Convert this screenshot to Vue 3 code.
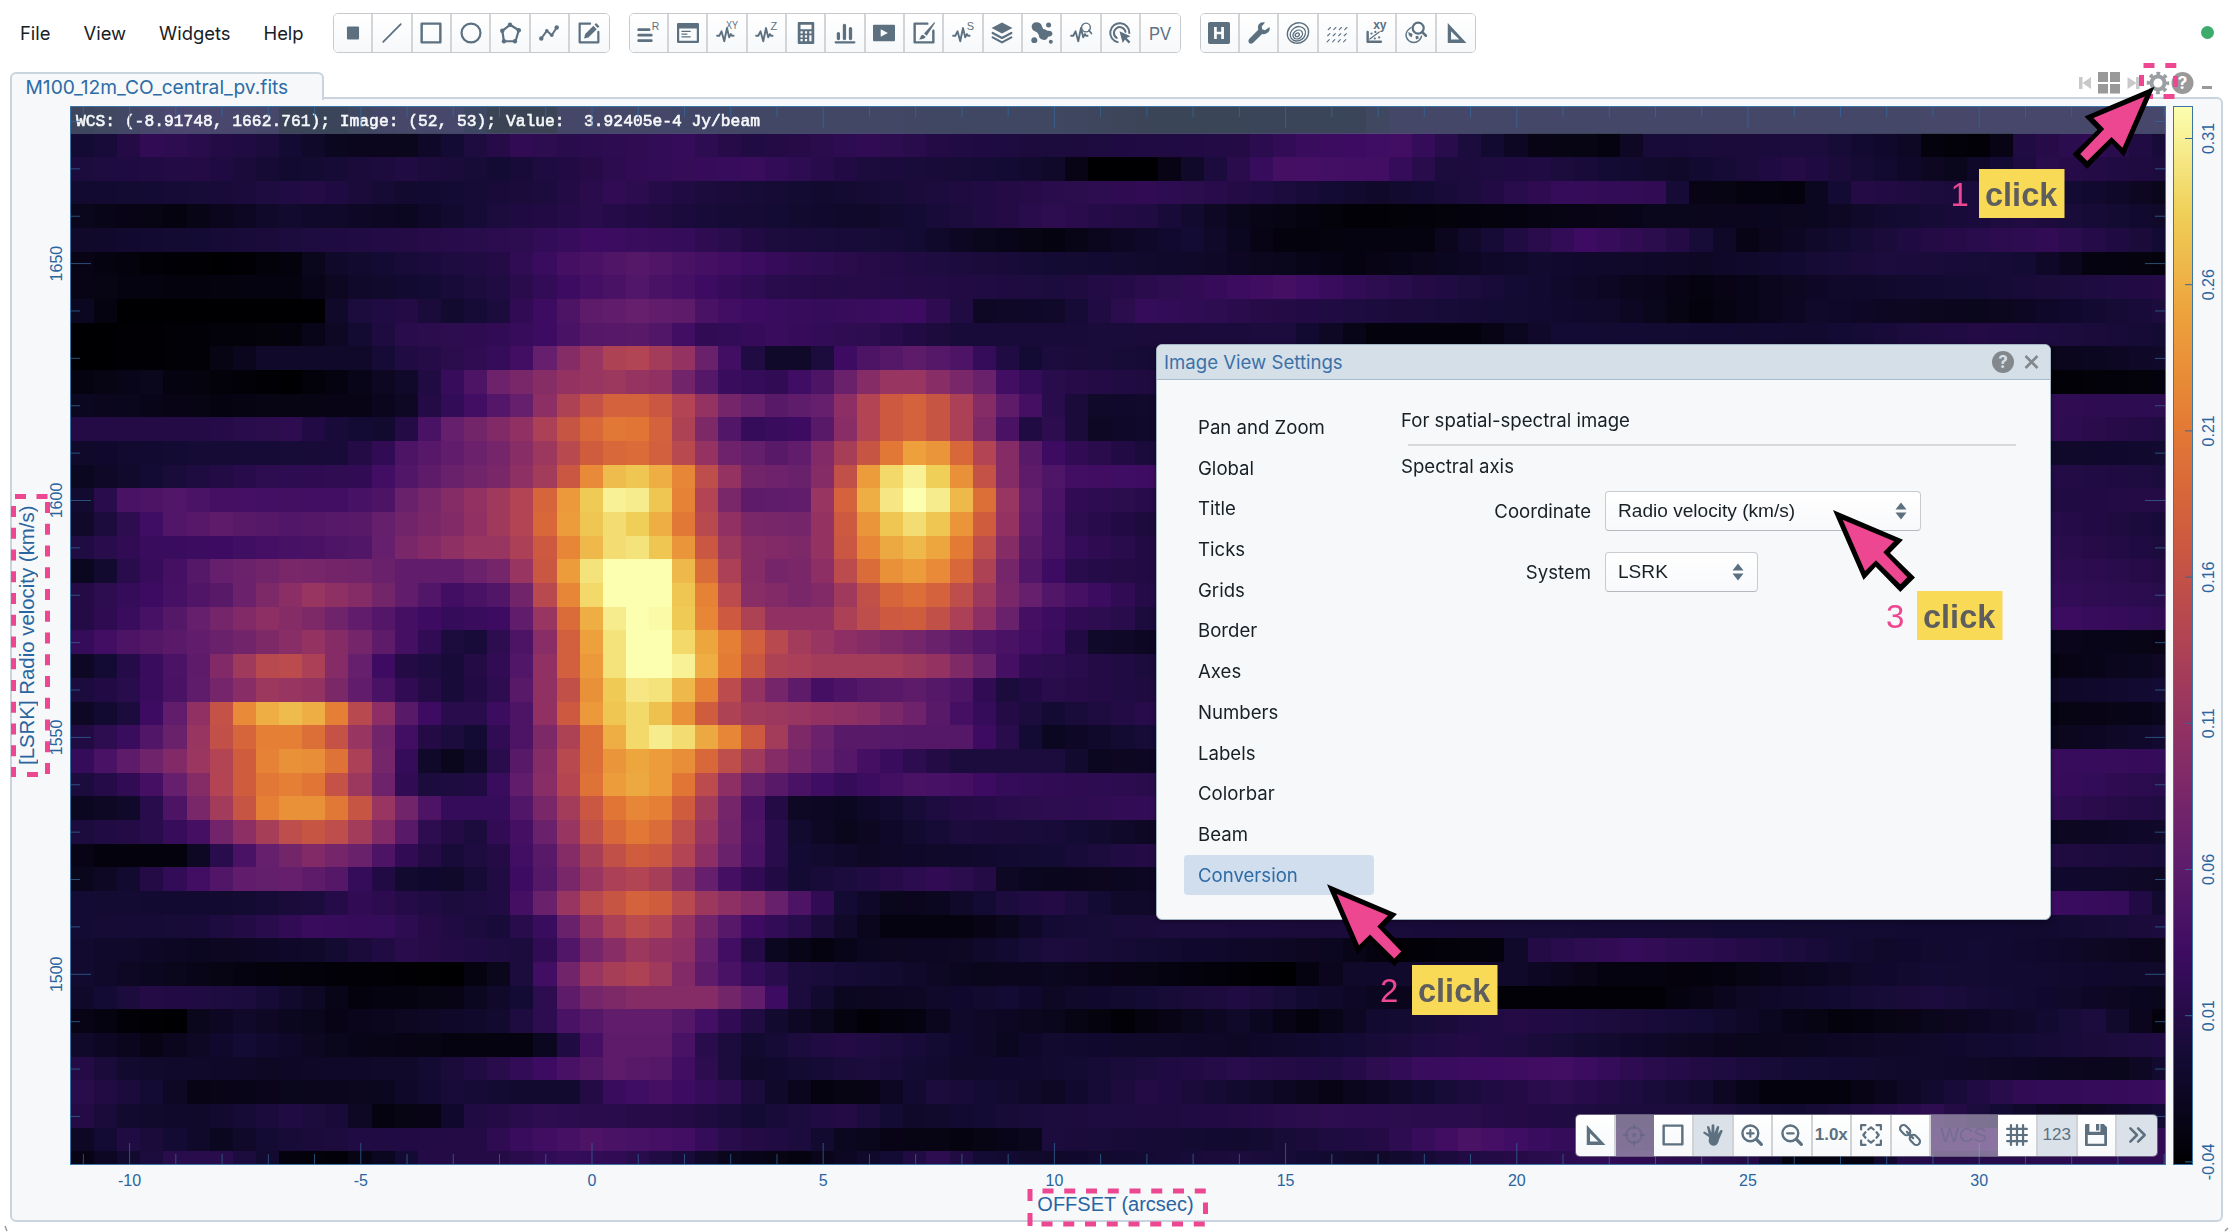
<script setup>
import { ref, onMounted } from 'vue'

const W = 2096
const H = 1059
const canvas = ref(null)

/* ---- colour map ---- */
const stops = [
  [0, 0, 2], [20, 11, 52], [61, 12, 98], [101, 31, 108], [141, 47, 101], [178, 68, 83],
  [208, 92, 62], [228, 123, 52], [237, 160, 59], [239, 207, 88], [252, 255, 176]
]
function colour(v) {
  const t = Math.max(0, Math.min(99.999, v)) / 10
  const i = Math.floor(t)
  const f = t - i
  return 'rgb(' + stops[i].map((c, k) => Math.round(c + (stops[i + 1][k] - c) * f)).join(',') + ')'
}

/* One line per channel: "column:level" knots, levels are interpolated between them. */
const rows = `
0:8,2:12,4:18,8:15,9:5,11:6,13:14,16:15,18:4,20:4,21:14,42:10,46:5,55:6,57:14,75:14,90:15
0:10,1:11,3:17,6:14,8:12,11:6,14:5,16:10,19:17,21:15,26:18,29:13,34:17,38:13,42:12,50:14,53:19,57:21,60:12,63:4,66:3,68:11,75:12,79:7,80:2,82:1,83:4,84:13,87:17,90:11
0:12,5:14,9:9,14:13,18:10,24:17,29:19,34:12,40:10,42:8,44:0,46:0,49:12,52:22,56:21,59:12,63:13,66:10,69:8,74:14,78:9,81:5,85:15,90:12
0:9,6:11,10:14,14:9,20:12,23:17,27:12,32:9,37:12,42:15,46:17,50:14,56:8,60:12,64:18,68:17,70:4,74:2,77:14,80:12,86:10,90:5
0:5,4:3,9:9,14:6,18:12,22:15,27:11,34:8,38:12,42:16,46:13,50:5,55:1,60:2,68:5,75:6,78:9,84:13,90:8
0:8,5:10,9:12,14:14,19:16,22:20,26:18,30:12,36:10,39:5,42:3,48:10,52:2,58:3,62:13,65:20,69:14,72:4,80:14,85:17,90:10
0:4,3:1,6:0,9:2,11:8,14:11,18:14,21:22,24:26,27:22,31:17,36:13,42:10,48:8,55:3,63:9,70:7,78:12,84:10,87:3,90:2
0:4,4:2,9:3,12:8,15:10,18:13,21:20,24:25,27:20,30:15,36:14,42:12,48:17,52:22,56:16,62:10,70:3,76:8,82:10,90:14
0:6,2:0,10:0,11:8,12:12,14:14,16:9,18:12,19:17,20:20,21:24,22:28,24:30,26:28,27:23,28:21,29:20,32:18,34:19,36:20,38:13,39:7,42:8,46:18,52:14,56:12,66:8,70:2,75:8,82:5,90:12
0:0,9:2,11:7,14:15,18:17,20:20,21:23,22:26,24:27,25:25,27:17,30:19,34:16,38:11,42:11,52:12,56:2,60:2,64:10,75:9,82:14,90:10
0:0,5:1,8:8,12:8,14:13,18:18,19:21,20:30,21:38,22:43,23:49,24:50,25:46,26:42,27:31,28:21,29:13,30:8,31:8,32:12,33:20,34:24,36:28,38:24,39:18,40:13,41:10,42:12,47:10,85:5,90:8
0:3,3:5,4:3,7:1,9:0,11:3,14:8,15:13,17:24,18:32,19:35,21:42,23:44,25:41,26:33,27:26,28:19,30:17,32:24,33:31,34:38,35:43,36:43,37:39,39:31,40:21,42:15,47:12,85:1,90:2
0:6,6:3,12:4,14:7,15:14,17:21,19:30,20:40,21:49,22:56,23:62,24:62,25:58,26:50,27:42,28:34,30:27,32:30,33:40,34:50,35:59,36:62,37:57,38:48,39:38,40:28,41:22,42:15,44:8,47:9,85:17,90:16
0:14,5:14,9:16,11:11,13:9,14:14,15:23,16:30,18:37,19:41,20:48,21:57,22:64,23:69,24:68,25:62,26:49,27:36,28:25,29:18,31:20,32:27,33:39,34:50,35:59,36:62,37:57,38:48,39:36,40:23,41:13,42:16,44:7,47:9,85:17,90:13
0:8,4:10,11:11,13:17,14:24,16:29,18:34,20:44,21:52,22:60,23:64,24:65,25:61,26:52,27:42,28:32,30:27,31:29,32:37,33:47,34:57,35:69,36:80,37:77,38:64,39:50,40:38,41:27,42:20,43:17,47:10,85:8,90:9
0:6,3:10,8:16,12:17,14:25,16:31,18:35,20:46,21:58,22:74,23:86,24:88,25:83,26:73,27:54,28:42,29:33,31:31,32:38,33:55,34:79,35:92,36:97,37:90,38:76,39:56,40:38,41:28,43:21,47:20,85:14,90:12
0:9,1:15,2:23,4:25,6:22,11:21,13:24,14:31,16:38,18:45,19:50,20:63,21:78,22:89,23:97,24:96,25:88,26:72,27:50,28:35,29:28,31:29,32:43,33:62,34:83,35:95,36:100,37:96,38:85,39:66,40:43,41:30,43:17,47:14,85:13,90:14
0:8,2:16,4:25,6:28,9:25,12:27,14:33,16:37,18:45,19:50,20:64,21:79,22:88,23:93,24:90,25:83,26:69,27:52,28:41,29:35,31:34,32:42,33:59,34:77,35:88,36:93,37:88,38:77,39:60,40:42,41:29,43:16,47:11,85:15,90:11
0:13,3:19,6:20,12:25,14:35,17:43,18:43,19:48,20:59,21:73,22:85,23:93,24:94,25:88,26:77,27:58,28:44,29:38,31:36,32:42,33:58,34:73,35:82,36:85,37:81,38:70,39:54,40:38,41:27,43:18,47:12,85:16,90:12
0:6,1:9,2:15,4:22,6:30,9:35,12:33,14:29,16:29,18:34,19:43,20:58,21:79,22:94,23:100,25:100,26:85,27:65,28:48,29:38,30:34,31:35,32:40,33:53,34:65,35:76,36:79,37:74,38:64,39:49,40:34,41:25,43:15,47:13,85:17,90:14
0:14,3:20,6:27,8:36,10:43,12:38,14:29,16:21,18:25,19:33,20:52,21:73,22:92,23:100,25:100,26:88,27:72,28:53,29:39,31:35,32:37,33:45,34:55,35:63,36:66,37:62,38:54,39:44,40:35,41:30,42:25,45:17,47:12,85:18,90:15
0:14,2:19,4:26,6:34,8:40,10:36,12:29,14:22,16:18,18:20,19:29,20:43,21:65,22:83,23:96,24:100,25:99,26:89,27:73,28:59,29:49,30:41,32:41,33:48,34:54,35:59,36:60,37:55,38:48,39:40,40:31,41:22,43:17,45:15,47:9,85:20,90:17
0:18,2:24,5:29,7:33,10:42,12:34,14:22,16:12,17:11,18:16,19:24,20:39,21:61,22:80,23:94,24:100,25:100,26:92,27:81,28:71,29:61,30:52,31:46,33:40,36:34,39:25,42:19,44:8,47:6,85:5,90:4
0:7,1:10,3:19,5:28,6:37,7:45,8:52,9:53,10:48,11:38,12:30,13:20,14:14,16:11,18:17,19:25,20:41,21:61,22:78,23:94,24:100,25:100,26:97,27:83,28:70,29:58,30:49,32:46,35:46,37:42,39:31,40:22,41:17,47:11,85:3,90:7
0:12,2:15,4:23,6:34,8:44,10:42,12:29,14:17,16:11,18:16,19:27,20:41,21:55,22:76,23:89,24:95,25:94,26:85,27:72,28:53,29:42,30:34,32:22,34:26,36:28,38:24,39:17,40:12,42:15,47:12,85:7,90:10
0:7,2:12,3:20,4:29,5:41,6:56,7:74,8:83,9:86,10:83,11:71,12:52,13:40,14:27,15:20,16:15,17:15,19:24,20:41,21:59,22:78,23:88,24:92,25:87,26:76,27:60,28:49,29:45,31:43,34:39,36:32,38:22,40:14,42:10,47:16,85:3,90:5
0:13,2:19,4:31,5:43,6:55,7:63,8:71,9:71,10:66,11:56,12:43,13:33,14:21,15:14,17:10,18:17,19:24,20:36,21:49,22:66,23:83,24:92,25:96,26:93,27:82,28:73,29:59,30:46,31:36,33:27,36:26,38:26,39:20,41:10,42:6,47:12,85:5,90:9
0:18,2:28,4:37,6:50,7:60,8:72,9:76,10:75,11:67,12:48,13:34,14:18,15:8,16:5,17:8,18:15,19:27,20:38,21:52,22:66,23:77,24:81,25:79,26:75,27:64,28:54,29:45,30:38,32:30,34:22,36:16,38:12,42:12,44:6,47:7,85:19,90:18
0:12,2:17,3:22,4:30,5:38,6:50,7:60,8:69,9:71,10:68,11:56,12:44,13:32,14:17,15:12,17:13,18:19,19:29,20:39,21:51,22:67,23:79,24:82,25:79,26:68,27:53,28:40,29:31,31:23,33:18,36:23,38:22,40:18,42:17,47:15,85:19,90:15
0:6,2:8,3:15,4:24,5:35,6:46,7:57,8:71,9:76,10:76,11:69,12:57,13:43,14:33,15:24,16:18,18:18,19:25,20:35,21:46,22:58,23:68,24:73,25:71,26:60,27:46,28:34,29:23,30:14,31:7,33:6,35:9,38:14,42:16,47:18,85:17,90:13
0:12,3:15,5:22,6:33,7:40,8:47,9:54,10:57,11:54,12:46,13:37,14:27,15:16,17:12,19:22,20:31,21:43,22:55,23:64,24:69,25:65,26:54,27:43,28:33,29:24,30:15,31:9,33:5,36:9,38:12,42:11,47:6,85:6,90:8
0:4,1:2,4:2,5:7,6:15,7:23,8:30,10:37,12:31,13:24,14:17,16:11,18:14,19:21,20:27,21:38,22:47,23:55,24:60,25:58,26:50,27:40,28:31,29:23,30:15,31:10,34:7,37:8,42:10,47:15,85:13,90:11
0:5,2:9,3:14,5:21,7:29,9:30,11:26,12:18,14:9,16:8,18:13,19:20,20:26,21:35,22:43,23:48,24:50,25:47,26:39,27:30,28:22,29:17,31:10,34:13,37:17,39:14,40:7,42:5,47:7,85:9,90:7
0:10,6:9,10:12,12:17,16:12,18:13,19:22,20:31,21:43,22:52,23:57,24:62,25:60,26:52,27:44,29:37,31:24,33:10,35:5,37:6,40:12,42:14,45:8,47:8,85:20,88:18,90:9
0:10,5:11,8:15,10:19,13:18,16:13,18:11,20:19,21:31,22:41,23:48,24:53,25:50,26:42,27:33,29:20,31:15,33:8,35:3,38:3,40:5,42:10,47:12,85:9,90:12
0:9,5:6,10:8,14:15,17:13,19:12,20:17,21:25,22:34,24:44,26:40,27:30,28:21,29:14,30:6,32:3,34:6,38:7,42:12,47:9,54:6,57:1,61:2,63:14,67:18,72:14,78:8,82:10,90:5
0:9,3:6,8:2,16:0,18:5,19:12,20:21,21:33,22:43,23:47,24:49,25:45,26:37,27:28,29:18,31:12,35:9,39:5,42:6,48:2,52:0,55:8,58:9,62:8,66:3,70:2,76:7,80:10,90:8
0:8,3:14,7:12,10:7,12:2,16:4,19:10,20:16,21:28,22:34,24:38,27:38,29:29,30:20,31:12,33:6,36:7,40:10,42:7,50:13,56:6,60:1,68:1,72:7,80:12,90:5
0:4,2:1,4:0,5:5,7:8,11:4,15:7,18:9,20:16,21:23,23:29,25:29,26:26,28:17,30:9,32:5,34:1,36:3,38:8,42:5,45:1,50:8,53:2,56:9,62:14,70:10,76:2,84:8,87:12,90:2
0:8,3:4,7:10,11:5,16:3,19:3,20:6,21:13,22:22,23:28,25:28,26:23,27:15,29:9,31:12,33:14,36:11,40:6,42:9,50:7,55:10,60:14,66:9,72:5,80:8,90:13
0:14,2:9,8:7,14:8,18:15,20:20,23:28,25:26,27:16,29:8,34:12,38:8,42:9,50:15,54:13,58:19,64:21,68:15,74:10,80:8,88:5,90:9
0:15,3:10,5:4,9:5,13:6,16:11,19:9,21:9,23:19,25:22,28:16,30:8,32:3,34:4,37:12,42:7,46:14,50:9,54:4,60:12,64:16,70:9,73:2,76:2,80:9,84:17,90:19
0:14,2:9,5:8,9:13,11:11,13:3,15:4,17:13,20:16,26:14,29:10,33:14,36:8,42:12,48:13,54:16,60:15,66:12,70:12,74:9,80:16,83:10,86:5,90:10
0:7,2:13,4:10,6:6,8:10,12:13,17:14,19:19,22:24,26:21,28:15,31:12,33:6,35:4,38:3,41:5,42:12,50:9,56:14,60:23,64:18,67:14,73:12,78:16,84:20,90:17
0:4,2:9,4:15,6:15,8:9,9:2,11:1,13:6,15:14,18:14,21:18,23:17,26:11,28:5,31:3,35:10,37:16,39:10,42:8,50:12,56:8,60:13,66:17,72:14,74:3,77:3,79:14,90:17
`.trim().split('\n').map(l => l.split(',').map(k => k.split(':').map(Number)))

function sample(knots, c) {
  for (let i = 1; i < knots.length; i++) {
    if (c <= knots[i][0]) {
      const [a, va] = knots[i - 1]
      const [b, vb] = knots[i]
      return va + (vb - va) * (c - a) / (b - a)
    }
  }
  return knots[knots.length - 1][1]
}

onMounted(() => {
  const g = canvas.value.getContext('2d')
  rows.forEach((knots, r) => {
    const y0 = r === 0 ? 0 : Math.round(3.5 + 23.68 * r)
    const y1 = Math.round(3.5 + 23.68 * (r + 1))
    for (let c = 0; c < 91; c++) {
      const x0 = c ? Math.round(1 + 23.12 * c) : 0
      const x1 = Math.round(1 + 23.12 * (c + 1))
      g.fillStyle = colour(sample(knots, c))
      g.fillRect(x0, y0, x1 - x0, y1 - y0)
    }
  })
})

/* ---- axes ---- */
const xTicks = []
for (let k = -11; k <= 34; k++) xTicks.push({ x: 522 + 46.24 * k, major: k % 5 === 0, v: k })
const yTicks = []
for (let k = -13; k <= 8; k++) yTicks.push({ y: 394.5 + 47.38 * -k, major: k % 5 === 0, v: 1600 + k * 10 })
const yShown = yTicks.filter(t => t.y > 4 && t.y < H - 1)
const bar = ['0.31', '0.26', '0.21', '0.16', '0.11', '0.06', '0.01', '-0.04'].map((t, i) => ({ t, y: 32.5 + 146.2 * i }))

/* ---- icons, 20 x 20 grid ---- */
const s = (d, w = 2) => `<path d="${d}" fill="none" stroke="currentColor" stroke-width="${w}" stroke-linecap="round" stroke-linejoin="round"/>`
const f = d => `<path d="${d}" fill="currentColor" fill-rule="evenodd"/>`
const t = (x, y, z, str, extra = '') => `<text x="${x}" y="${y}" font-size="${z}" font-family="Liberation Sans, sans-serif" fill="currentColor" ${extra}>${str}</text>`
const pulse = s('M1 12.5H3L5 8.5L7.5 17.5L10 5.5L12 14L13.5 11L14.5 12.5H16', 1.7)
const ruler = f('M2.5 1V19H19.5ZM5.5 8.5L13 16H5.5Z')
const icons = {
  point: f('M5.5 4H14.5Q15.5 4 15.5 5V15Q15.5 16 14.5 16H5.5Q4.5 16 4.5 15V5Q4.5 4 5.5 4Z'),
  line: s('M2 18L18 2', 1.6),
  rect: s('M1.5 1.5H18.5V18.5H1.5Z', 2.2),
  ellipse: '<circle cx="10" cy="10" r="8.6" fill="none" stroke="currentColor" stroke-width="2"/>',
  polygon: s('M10 2.5L18 7.5L15 17.5L4.5 17.5L3 8Z') + '<g fill="currentColor"><circle cx="10" cy="2.5" r="2"/><circle cx="18" cy="7.5" r="2"/><circle cx="14.5" cy="17.5" r="2"/><circle cx="4.5" cy="17.5" r="2"/><circle cx="3" cy="8" r="2"/></g>',
  poly: s('M3 15L8 8L12.5 12L17 5', 1.8) + '<g fill="currentColor"><circle cx="3" cy="15" r="2"/><circle cx="8" cy="8" r="1.6"/><circle cx="12.5" cy="12" r="1.6"/><circle cx="17" cy="5" r="2"/></g>',
  edit: s('M11 1.5H1.5V18.5H18.5V9', 2) + f('M5.5 15L6.5 11L14 3.5L17 6.5L9.5 14ZM15 2.5L16.5 1L19.5 4L18 5.5Z'),
  list: s('M1.5 7H11M1.5 12H13M1.5 17H13', 2.5) + t(13.5, 7.5, 9.5, 'R'),
  app: f('M1 1H19Q20 1 20 2V18Q20 19 19 19H1Q0 19 0 18V2Q0 1 1 1ZM2 6V17H18V6Z') + s('M4.5 8.5H12M4.5 11H9M4.5 13.5H12', 1.2),
  xy: pulse + t(9, 6.5, 10.5, 'XY', 'textLength="11" lengthAdjust="spacingAndGlyphs"'),
  z: pulse + t(14, 7, 10, 'Z'),
  st: pulse + t(13.5, 7.5, 10, 'S'),
  calc: f('M3.5 0H16.5Q17.5 0 17.5 1V19Q17.5 20 16.5 20H3.5Q2.5 20 2.5 19V1Q2.5 0 3.5 0ZM5 2.5V6.5H15V2.5ZM5 8.5V10.5H7V8.5ZM9 8.5V10.5H11V8.5ZM13 8.5V10.5H15V8.5ZM5 12V14H7V12ZM9 12V14H11V12ZM13 12V17.5H15V12ZM5 15.5V17.5H7V15.5ZM9 15.5V17.5H11V15.5Z'),
  hist: s('M1.5 18.5H18.5', 2) + s('M4 10.5V15M9.5 3V15M15 6V15', 3),
  play: f('M1 2.5H19Q20 2.5 20 3.5V16.5Q20 17.5 19 17.5H1Q0 17.5 0 16.5V3.5Q0 2.5 1 2.5ZM7 6.5V13.5L13.5 10Z'),
  brush: s('M13 1.5H1.5V18.5H18.5V8', 2.2) + f('M19.5 0L20 1L12.5 12.5L10 10.5ZM9 11.5L11.5 13.5Q10.5 16 5.5 16Q7 14 7 13Q7.5 11.5 9 11.5Z'),
  layers: f('M10 0.5L19.5 5.5L10 10.5L0.5 5.5Z') + s('M1.5 10L10 14.5L18.5 10M1.5 14L10 18.5L18.5 14', 2),
  scatter: f('M0.5 4.5Q1 0.3 5 0.3Q9 0.3 10 4Q10.500 6.500 12.500 6.500L15 8Q19.5 7.500 19.5 11Q19 13.5 15.500 13.5Q14 17.500 10 16Q7 14.500 7 11.500Q5.500 9 3.500 8.500Q1 7.500 0.5 4.5Z') + '<g fill="currentColor"><circle cx="16" cy="2.8" r="2.3"/><circle cx="3" cy="16.5" r="2.7"/><circle cx="18" cy="18" r="1.8"/></g>',
  q: pulse + '<circle cx="14.5" cy="5" r="4" fill="none" stroke="currentColor" stroke-width="1.3"/>' + s('M17.2 7.5L19.5 10.5', 1.5),
  target: s('M8 18.3A8.7 8.7 0 1 1 18.5 10M7 14.5A5.3 5.3 0 1 1 15 9', 1.8) + f('M9.5 8.5L19.5 13L16 14.5L19.5 18L18 19.5L14.5 16L12.5 19Z'),
  pv: t(0, 16.5, 17, 'PV', 'textLength="20" lengthAdjust="spacingAndGlyphs"'),
  h: f('M1.5 0H18.5Q20 0 20 1.5V18.5Q20 20 18.5 20H1.5Q0 20 0 18.5V1.5Q0 0 1.5 0ZM5.5 4.5V15.5H8V11.2H12V15.5H14.5V4.5H12V8.8H8V4.5Z'),
  wrench: f('M19.5 4.5L15.5 7.5L12.8 6.5L12.5 4L15.5 0.5Q11.5 -0.5 9.5 2.5Q8.5 4.5 9.3 7L1 15.5Q-0.5 17.5 1 19Q2.5 20.5 4.5 19L12.8 10.8Q15.5 11.5 17.5 10Q20.5 8 19.5 4.5Z'),
  contour: '<g fill="none" stroke="currentColor" stroke-width="1.2" transform="rotate(-35 10 10)"><ellipse cx="10" cy="10" rx="10" ry="9"/><ellipse cx="9.5" cy="10.5" rx="7.3" ry="6.2"/><ellipse cx="9" cy="11" rx="4.6" ry="3.7"/><ellipse cx="8.5" cy="11" rx="2" ry="1.5"/></g>',
  vector: s('M2 7L4 5M7 7L9 5M12 7L14 5M17 7L19 5M1.5 12.5L3.5 10.5M6.5 12.5L8.5 10.5M11.5 12.5L13.5 10.5M16.5 12.5L18.5 10.5M1 18L3 16M6 18L8 16M11 18L13 16M16 18L18 16', 1),
  xyplot: s('M1.5 9V18H13.5', 2.2) + s('M3.5 15.5L12 9', 1.1) + '<g fill="currentColor"><circle cx="5" cy="10.5" r="1"/><circle cx="8.5" cy="9" r="1"/><circle cx="8" cy="15" r="1"/><circle cx="12" cy="14" r="1"/></g>' + t(6.5, 6.5, 11, 'xy', 'font-weight="bold"'),
  search: '<circle cx="12" cy="5.5" r="5" fill="none" stroke="currentColor" stroke-width="2"/>' + s('M15.5 9L19 12.5', 2.3) + s('M5.5 5Q0.5 8 1 13Q2.5 18.5 8 18.7Q13.5 18.5 15 13', 1.3) + f('M3 9L7 11L6 14L3.5 12ZM9.5 13L12 12.5L12.5 15L10 16Z'),
  ruler,
  aim: '<circle cx="10" cy="10" r="7" fill="none" stroke="currentColor" stroke-width="2"/><circle cx="10" cy="10" r="2" fill="currentColor"/>' + s('M10 0.5V4M10 16V19.5M0.5 10H4M16 10H19.5', 1.6),
  hand: f('M6.5 12L1.2 8.3Q0.8 7 2.3 6.8L6 9L4.5 2.8Q5 1.3 6.5 2.2L8.5 8L8.8 1Q10 -0.5 11.2 1L11.3 8L13.7 2Q15 1.2 15.7 2.6L14.3 9L17 5.5Q18.5 5 18.8 6.3L15.5 14Q14.5 19.5 11 19.8Q7 20 6 15.5Z'),
  zin: '<circle cx="8.5" cy="8.5" r="7.2" fill="none" stroke="currentColor" stroke-width="2.2"/>' + s('M14 14L18.5 18.5', 3) + s('M5.5 8.5H11.5M8.5 5.5V11.5', 1.9),
  zout: '<circle cx="8.5" cy="8.5" r="7.2" fill="none" stroke="currentColor" stroke-width="2.2"/>' + s('M14 14L18.5 18.5', 3) + s('M5.5 8.5H11.5', 1.9),
  fit: s('M1 5V1H5M15 1H19V5M19 15V19H15M5 19H1V15', 2) + s('M7.5 5L10 3L12.5 5M15 7.5L17 10L15 12.5M12.5 15L10 17L7.5 15M5 12.5L3 10L5 7.5', 2),
  link: '<g fill="none" stroke="currentColor" stroke-width="2" stroke-linecap="round" transform="rotate(45 10 10)"><rect x="-1.5" y="6.8" width="10.5" height="6.4" rx="3.2"/><rect x="11" y="6.8" width="10.5" height="6.4" rx="3.2"/><path d="M6 10H14"/></g>',
  grid: s('M4.5 1V19M15.5 1V19M1 4.5H19M1 15.5H19M10 1V19M1 10H19', 2),
  save: f('M1 0H4V7H14V0H17L20 3V19Q20 20 19 20H1Q0 20 0 19V1Q0 0 1 0ZM10 0H13V6H10ZM2.5 10V18H17.5V10Z'),
  more: s('M4 4L10 10L4 16M11 4L17 10L11 16', 2.3)
}
const groups = [
  ['point', 'line', 'rect', 'ellipse', 'polygon', 'poly', 'edit'],
  ['list', 'app', 'xy', 'z', 'calc', 'hist', 'play', 'brush', 'st', 'layers', 'scatter', 'q', 'target', 'pv'],
  ['h', 'wrench', 'contour', 'vector', 'xyplot', 'search', 'ruler']
]
const tools = [
  { i: 'ruler', w: 40.5 }, { i: 'aim', w: 38, off: 1 }, { i: 'rect', w: 40 }, { i: 'hand', w: 39.5, on: 1 },
  { i: 'zin', w: 39.5 }, { i: 'zout', w: 39.5 }, { t: '1.0x', w: 39.5, b: 1 }, { i: 'fit', w: 39.5 }, { i: 'link', w: 39.5 },
  { t: 'WCS', w: 67, off: 1 }, { i: 'grid', w: 40 }, { t: '123', w: 39.5, on: 1 }, { i: 'save', w: 39.5 }, { i: 'more', w: 39.5, on: 1 }
]
const pages = ['Pan and Zoom', 'Global', 'Title', 'Ticks', 'Grids', 'Border', 'Axes', 'Numbers', 'Labels', 'Colorbar', 'Beam', 'Conversion']

/* ---- call-outs ---- */
const outer = '0,0 70,29.7 57,43 82,67.5 67.3,82 42.7,56.7 30.5,70'
const inner = '9.7,9.7 61,31.3 50.3,42.3 74.3,67.3 67.3,74.3 43,50.3 32,61'
const arrows = ['translate(2154.5 86.8) scale(-1 1)', 'translate(1327 884.3)', 'translate(1833 510)']
const steps = [
  { n: 1, nx: 1950.5, x: 1979, y: 169, h: 49 },
  { n: 2, nx: 1380, x: 1412, y: 965, h: 50 },
  { n: 3, nx: 1886, x: 1917, y: 591, h: 49 }
]
</script>

<template>
  <div class="app">
    <header class="menubar">
      <nav class="menu">
        <span>File</span><span>View</span><span>Widgets</span><span>Help</span>
      </nav>
      <div v-for="(g, k) in groups" :key="k" class="group">
        <button v-for="i in g" :key="i"><svg viewBox="0 0 20 20" v-html="icons[i]"></svg></button>
      </div>
      <i class="status"></i>
    </header>

    <div class="tabrow">
      <div class="tab">M100_12m_CO_central_pv.fits</div>
      <div class="panel-tools">
        <svg width="140" height="26" viewBox="0 0 140 26">
          <path fill="#c9c9c9" d="M4 7h3.500v12H4zM16 7v12L7.500 13zM52.500 7v12l9-6zM61 7h3.500v12H61z" />
          <path fill="#999" d="M23 2h10v10h-10zM35 2h10v10h-10zM23 14h10v9.500h-10zM35 14h10v9.500h-10z" />
          <circle cx="83" cy="13" r="6.5" fill="none" stroke="#9a9fa4" stroke-width="4" />
          <circle cx="83" cy="13" r="9.5" fill="none" stroke="#9a9fa4" stroke-width="3.500" stroke-dasharray="3.730 3.730" stroke-dashoffset="1.860" />
          <circle cx="107.500" cy="13" r="11" fill="#999" />
          <text x="107.500" y="19" text-anchor="middle" font-size="17" font-weight="bold" fill="#fff">?</text>
          <path fill="#999" d="M127 16h10v3h-10z" />
        </svg>
      </div>
    </div>

    <main class="viewer">
      <div class="yaxis">
        <span class="ytitle">[LSRK] Radio velocity (km/s)</span>
        <svg class="ylabels" width="23" :height="H">
          <text v-for="k in yShown.filter(q => q.major)" :key="k.v" text-anchor="middle" :transform="`translate(14.5 ${k.y}) rotate(-90)`">{{ k.v }}</text>
        </svg>
      </div>
      <div class="center">
        <div class="plot">
          <canvas ref="canvas" :width="W" :height="H"></canvas>
          <div class="cursor-info">WCS: (-8.91748, 1662.761); Image: (52, 53); Value:&nbsp; 3.92405e-4 Jy/beam</div>
          <svg class="ticks" :width="W" :height="H">
            <g stroke="#33699b" stroke-width="1" opacity=".75">
              <template v-for="k in xTicks" :key="k.v">
                <line :x1="k.x" :x2="k.x" :y1="H" :y2="H - (k.major ? 22 : 11)" />
                <line :x1="k.x" :x2="k.x" y1="0" :y2="k.major ? 22 : 11" />
              </template>
              <template v-for="k in yShown" :key="k.v">
                <line x1="0" :x2="k.major ? 21 : 10" :y1="k.y" :y2="k.y" />
                <line :x1="W" :x2="W - (k.major ? 21 : 11)" :y1="k.y" :y2="k.y" />
              </template>
            </g>
            <rect x=".5" y=".5" :width="W - 1" :height="H - 1" fill="none" stroke="#3c74a8" />
          </svg>
          <div class="tools">
            <button v-for="(b, k) in tools" :key="k" :class="{ off: b.off, on: b.on, bold: b.b, wcs: b.t === 'WCS' }" :style="{ width: b.w + 'px' }">
              <svg v-if="b.i" viewBox="0 0 20 20" v-html="icons[b.i]"></svg>
              <template v-else>{{ b.t }}</template>
            </button>
          </div>
        </div>
        <svg class="xlabels" :width="W" height="28">
          <text v-for="k in xTicks.filter(q => q.major)" :key="k.v" :x="k.x" y="21" text-anchor="middle">{{ k.v }}</text>
        </svg>
        <div class="xtitle">OFFSET (arcsec)</div>
      </div>
      <div class="colorbar">
        <div class="ramp"></div>
        <svg class="clabels" width="29" :height="H">
          <text v-for="k in bar" :key="k.t" text-anchor="middle" :transform="`translate(20.5 ${k.y}) rotate(-90)`">{{ k.t }}</text>
        </svg>
        <svg class="cticks" width="20" :height="H">
          <line v-for="k in bar" :key="k.t" x1="12" x2="20" :y1="k.y" :y2="k.y" stroke="#33699b" />
        </svg>
      </div>
    </main>

    <section class="dialog">
      <header>
        <span>Image View Settings</span>
        <svg width="60" height="26" viewBox="0 0 60 26">
          <circle cx="13" cy="13" r="11" fill="#83888d" />
          <text x="13" y="19" text-anchor="middle" font-size="17" font-weight="bold" fill="#d5dfe8">?</text>
          <path d="M35.500 7l12 12M47.500 7l-12 12" stroke="#83888d" stroke-width="2.600" />
        </svg>
      </header>
      <div class="body">
        <ul>
          <li v-for="p in pages" :key="p" :class="{ active: p === 'Conversion' }">{{ p }}</li>
        </ul>
        <div class="form">
          <p class="heading">For spatial-spectral image</p>
          <hr>
          <p class="sub">Spectral axis</p>
          <label class="row"><span>Coordinate</span>
            <span class="select wide">Radio velocity (km/s)<svg width="12" height="18" viewBox="0 0 12 18"><path fill="#5c7080" d="M6 .5L11.500 7.500H.5ZM.5 10.500H11.500L6 17.500Z" /></svg></span>
          </label>
          <label class="row"><span>System</span>
            <span class="select">LSRK<svg width="12" height="18" viewBox="0 0 12 18"><path fill="#5c7080" d="M6 .5L11.500 7.500H.5ZM.5 10.500H11.500L6 17.500Z" /></svg></span>
          </label>
        </div>
      </div>
    </section>

    <svg class="marks" width="2232" height="1232">
      <g fill="none" stroke="#ec4790" stroke-width="5">
        <path d="M2143.500 65.500H2176.500" stroke-dasharray="11 10.800" />
        <path d="M2141.500 75V86M2175.500 76V87M2148 96.500H2153M2163.500 96.500H2174.500" />
        <path d="M13.500 506V777M47.500 502V774" stroke-dasharray="11 10.750" />
        <path d="M15 496.500H26M36.500 496.500H47.500M27 774.500H38" />
        <path d="M1042.500 1191H1206M1041.500 1224H1205" stroke-dasharray="11 10.750" />
        <path d="M1030 1189V1201M1030 1213V1226M1205.500 1202.500V1214" />
      </g>
      <g v-for="a in arrows" :key="a" :transform="a">
        <polygon :points="outer" fill="#000" />
        <polygon :points="inner" fill="#ec4790" />
      </g>
      <g v-for="k in steps" :key="k.n">
        <rect :x="k.x" :y="k.y" width="85.500" :height="k.h" fill="#f9da56" />
        <text :x="k.nx" :y="k.y + 37" font-size="33" fill="#ec4790">{{ k.n }}</text>
        <text :x="k.x + 6" :y="k.y + 37" font-size="32.500" font-weight="bold" fill="#5e5e5e">click</text>
      </g>
      <path d="M5 1226l2 5M2225 1231l3-3" stroke="#999" stroke-width="1.500" />
    </svg>
  </div>
</template>

<style>
body { margin: 0; background: #fff; overflow: hidden; }
</style>

<style scoped>
.app { position: relative; width: 2232px; height: 1232px; display: flex; flex-direction: column; font-family: Inter, sans-serif; color: #182026; background: #fff; overflow: hidden; }
.menubar { height: 65px; display: flex; align-items: center; flex: none; }
.menu { width: 333px; display: flex; gap: 33px; padding-left: 20px; box-sizing: border-box; font-size: 18.4px; flex: none; }
button { font: inherit; color: inherit; margin: 0; padding: 0; border: 0; }
.group { display: flex; border: 1.5px solid #c6cacf; border-radius: 5px; overflow: hidden; height: 38px; margin-right: 19px; color: #5c7080; }
.group button { width: 39.35px; box-sizing: border-box; border-right: 2px solid #d2d4d7; background: linear-gradient(#fff, #f6f8fa); display: flex; align-items: center; justify-content: center; }
.group button:last-child { border-right: 0; width: 38.5px; }
.group svg { width: 22px; height: 22px; overflow: visible; }
.status { width: 13px; height: 13px; border-radius: 50%; background: #3dab6c; margin-left: auto; margin-right: 18px; }
.tabrow { height: 33px; flex: none; display: flex; justify-content: space-between; align-items: flex-end; padding-left: 10px; }
.tab { position: relative; z-index: 1; box-sizing: border-box; width: 314px; height: 28px; margin-bottom: -2px; border: 2px solid #c9d4df; border-bottom: 0; border-radius: 6px 6px 0 0; background: #f6f8fa; color: #2d6ca6; font-size: 19.2px; line-height: 27px; padding-left: 13.5px; }
.panel-tools { width: 157.5px; height: 28.5px; }
.panel-tools text, .dialog header text { font-family: Inter, sans-serif; }
.viewer { position: relative; box-sizing: border-box; margin: -1px 9px 0 10px; height: 1125px; border: 2px solid #c9d4df; border-radius: 0 6px 6px 6px; background: #f6f8fa; display: flex; padding-top: 7px; color: #2965a0; font-family: "Liberation Sans", sans-serif; }
.yaxis { width: 58px; height: 1059px; flex: none; display: flex; }
.ytitle { width: 35px; writing-mode: vertical-rl; transform: rotate(180deg); text-align: center; font-size: 20.4px; line-height: 31px; white-space: nowrap; }
.ylabels, .clabels { overflow: visible; }
svg text { font-family: "Liberation Sans", sans-serif; }
.viewer > div > svg text, .xlabels text { fill: #2965a0; font-size: 16px; }
.center { width: 2096px; flex: none; }
.plot { position: relative; height: 1059px; }
canvas { display: block; }
.cursor-info { position: absolute; left: 0; top: 0; right: 0; height: 27.5px; box-sizing: border-box; padding-left: 6px; background: rgba(92, 112, 128, .6); color: #f6f8fa; font: 16.3px/31px "Liberation Mono", monospace; -webkit-text-stroke: .6px #f6f8fa; white-space: pre; }
.ticks { position: absolute; left: 0; top: 0; }
.xlabels { display: block; overflow: visible; }
.xtitle { text-align: center; font-size: 20px; line-height: 22px; padding-right: 5px; }
.colorbar { position: relative; display: flex; margin-left: 7px; }
.ramp { box-sizing: border-box; width: 20px; height: 1059px; border: 1px solid #3c74a8; background: linear-gradient(#fcffb0, #efcf58 10%, #eda03b 20%, #e47b34 30%, #d05c3e 40%, #b24453 50%, #8d2f65 60%, #651f6c 70%, #3d0c62 80%, #140b34 90%, #000002); }
.cticks { position: absolute; left: 0; top: 0; }
.tools { position: absolute; left: 1505.5px; top: 1008.5px; height: 41px; display: flex; border-radius: 4px; overflow: hidden; color: #5c7080; box-shadow: 0 0 0 1px rgba(150, 150, 165, .6); }
.tools button { display: flex; align-items: center; justify-content: center; box-sizing: border-box; border-right: 2px solid #d0d2d6; background: linear-gradient(#fff, #f6f8fa); font: 17px "Liberation Sans", sans-serif; flex: none; }
.tools button:last-child { border-right: 0; }
.tools button.on { background: #dae1e8; }
.tools button.off { background: rgba(206, 200, 217, .55); border-right-color: transparent; color: rgba(92, 100, 128, .5); }
.tools button.bold { font-weight: bold; }
.tools button.wcs { font-size: 20px; color: rgba(92, 100, 128, .4); }
.tools svg { width: 22px; height: 22px; overflow: visible; }
.dialog { position: absolute; left: 1156px; top: 344px; width: 894.5px; height: 576px; box-sizing: border-box; border: 1.5px solid #a3b4c2; border-radius: 6px; background: #f6f8fa; box-shadow: 0 1px 5px rgba(0, 0, 0, .4); overflow: hidden; font-size: 18.6px; }
.dialog header { height: 34px; border-bottom: 1.5px solid #a9bac8; background: #d5dfe8; display: flex; justify-content: space-between; align-items: center; color: #3a71a8; padding: 0 0 0 7px; }
.body { display: flex; }
ul { list-style: none; margin: 0; padding: 27px 0 0 27px; width: 190px; }
li { height: 40.7px; line-height: 41.5px; padding-left: 14px; border-radius: 4px; }
li.active { background: #d1deed; color: #2f6ba5; }
.form { margin-left: 27px; flex: 1; padding-top: 28px; }
p { margin: 0; line-height: 24px; }
hr { margin: 12px 34px 8px 7px; border: 0; border-top: 2px solid #d7dadd; }
.row { display: flex; align-items: center; height: 40px; margin-top: 13px; }
.row + .row { margin-top: 21px; }
.row > span:first-child { width: 190px; text-align: right; margin-right: 14px; }
.select { box-sizing: border-box; width: 153px; height: 40px; border: 1.5px solid #c8ccd1; border-bottom-color: #b4b9bf; border-radius: 4px; background: linear-gradient(#fff, #f8f9fb); display: flex; align-items: center; justify-content: space-between; padding: 0 13px 0 12px; font: 19.1px "Liberation Sans", sans-serif; }
.select.wide { width: 316px; }
.marks { position: absolute; left: 0; top: 0; pointer-events: none; }
</style>
